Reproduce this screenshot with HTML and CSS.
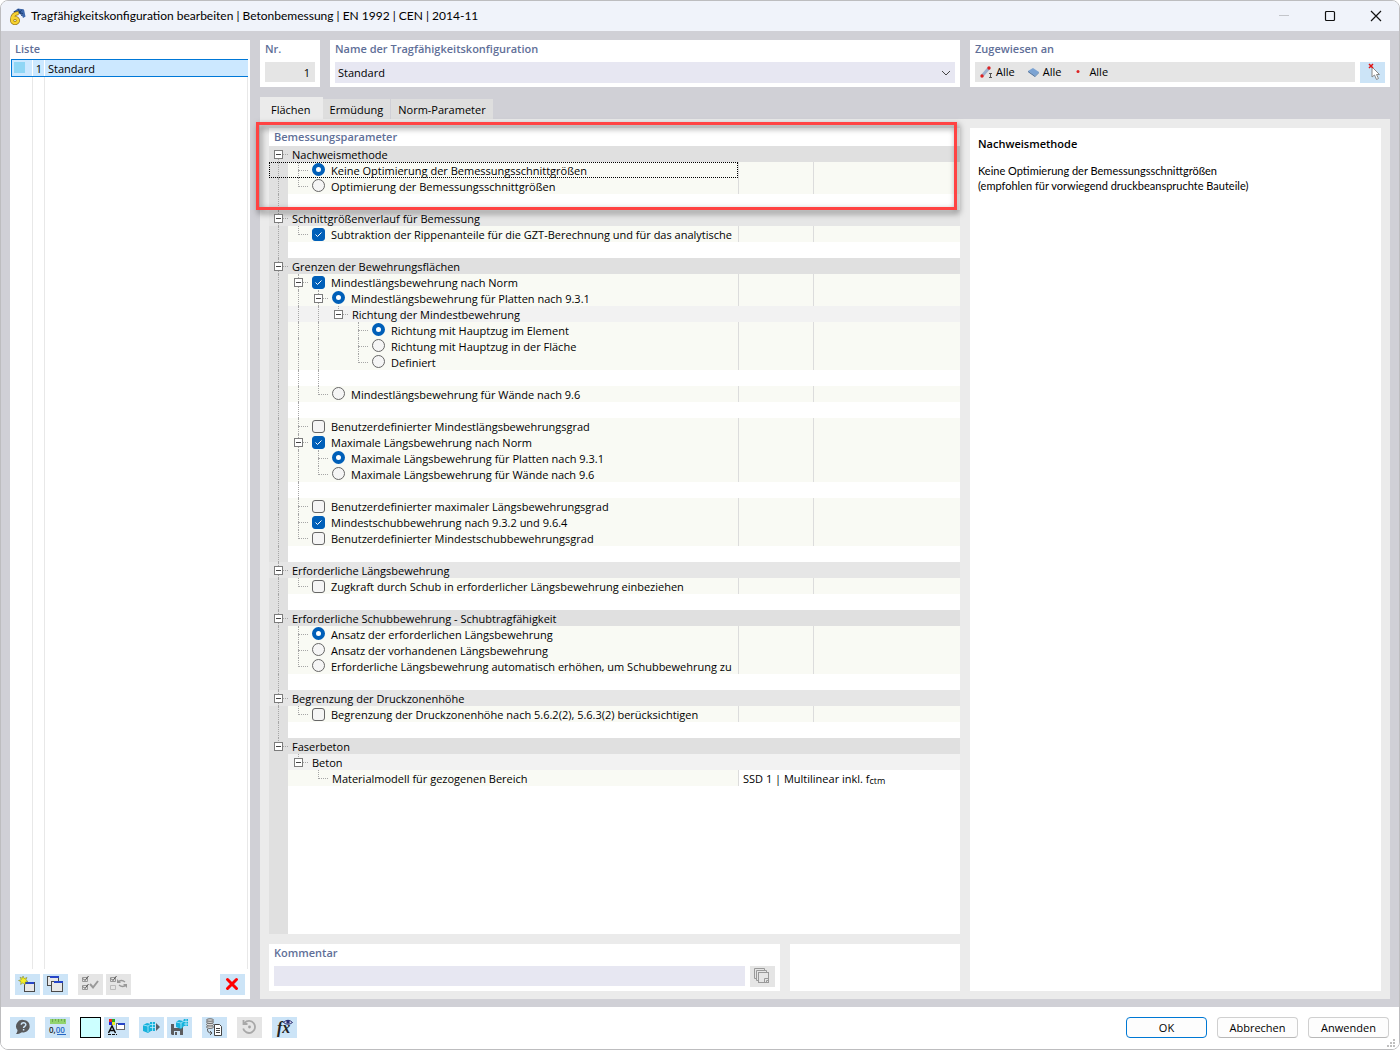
FILE: index.html
```html
<!DOCTYPE html>
<html lang="de">
<head>
<meta charset="utf-8">
<meta name="viewport" content="width=device-width, initial-scale=1">
<title>Tragfähigkeitskonfiguration bearbeiten</title>
<link rel="stylesheet" href="styles.css">
</head>
<body>
<div class="window">
  <header class="titlebar">
    <svg class="app-icon" width="17" height="17" viewBox="0 0 17 17"><path d="m4 4 5-3.500 6 1 1.500 7-2.500 1.500-1.500-4-6-1z" fill="#3f69ad"/><path d="m5 3.500 9 2M9 1l4 7M13 1.500l-3 4" stroke="#1d3f77" fill="none"/><path d="M9.500 5C5 5.500 3 8.500 3 12M9 12.500a3 2.600 0 1 1-6 0 3 2.600 0 1 1 6 0z" stroke="#94741a" stroke-width="4" fill="none"/><path d="M9.500 5C5 5.500 3 8.500 3 12M9 12.500a3 2.600 0 1 1-6 0 3 2.600 0 1 1 6 0z" stroke="#f7d22f" stroke-width="2.600" fill="none"/></svg>
    <h1 class="title">Tragfähigkeitskonfiguration bearbeiten | Betonbemessung | EN 1992 | CEN | 2014-11</h1>
    <div class="window-controls">
      <button class="wc" aria-label="Minimieren" disabled><svg width="12" height="12"><path d="M1 5.500h10" stroke="#c3c5ca"/></svg></button>
      <button class="wc" aria-label="Maximieren"><svg width="12" height="12"><rect x="1.500" y="1.500" width="9" height="9" rx="1" fill="none" stroke="#111" stroke-width="1.200"/></svg></button>
      <button class="wc" aria-label="Schließen"><svg width="12" height="12"><path d="m1 1 10 10M11 1 1 11" stroke="#111" stroke-width="1.200"/></svg></button>
    </div>
  </header>

  <main class="workspace">
    <aside class="panel list-panel">
      <h2 class="caption">Liste</h2>
      <div class="list" role="listbox" aria-label="Liste">
        <div class="list-row" role="option" aria-selected="true"><span class="swatch-cell"><span class="swatch"></span></span><span class="list-no">1</span><span class="list-name">Standard</span></div>
      </div>
      <div class="toolbar list-tools">
        <button class="tool" aria-label="Neu"><svg width="19" height="19" viewBox="0 0 19 19"><rect x="6.500" y="7.500" width="10" height="9" fill="#e8e8e8" stroke="#4a4a4a"/><path d="M7 7h9v2H7z" fill="#2746c8"/><path d="m5 1 1.200 2.600L9 2.500 7.800 5 10 6.500 7.300 7 7 10 5 7.800 2.600 9.500 3 6.700.5 5.500l2.800-.8L2 2.200l2.400 1z" fill="#f4ee25" stroke="#777a20" stroke-width=".5"/></svg></button>
        <button class="tool" aria-label="Kopieren"><svg width="19" height="19" viewBox="0 0 19 19"><rect x="1.500" y="1.500" width="11" height="9" fill="#e8e8e8" stroke="#4a4a4a"/><path d="M4 1h9v2H4z" fill="#2746c8"/><rect x="5.500" y="6.500" width="11" height="10" fill="#e8e8e8" stroke="#4a4a4a"/><path d="M8 6h9v2H8z" fill="#2746c8"/></svg></button>
        <button class="tool off apart" aria-label="Alle auswählen" disabled><svg width="19" height="19" viewBox="0 0 19 19" fill="none" stroke="#999"><path d="M1.500 2.500h5v4h-5zM1.500 10.500h5v4h-5z"/><path d="m2 3.500 2 2L7.500 1M2 11.500l2 2L7.500 9" stroke="#555"/><path d="m9 9 3 3.500L17 6" stroke-width="2"/></svg></button>
        <button class="tool off" aria-label="Auswahl umkehren" disabled><svg width="19" height="19" viewBox="0 0 19 19" fill="none" stroke="#999"><path d="M1.500 2.500h5v4h-5z"/><path d="m2 3.500 2 2L7.500 1" stroke="#555"/><path d="M1.500 10.500h5v4h-5z" stroke="#bbb"/><path d="M9 7.500c2-3 5-2 7-.5M17 9.500c-2 3-5 2-7 .5" stroke-width="1.500"/><path d="M8 4v4h4zM18 13V9h-4z" fill="#999" stroke="none"/></svg></button>
        <button class="tool last" aria-label="Löschen"><svg width="19" height="19" viewBox="0 0 19 19"><path d="m4.500 4.500 9 9M13.500 4.500l-9 9" stroke="#f00" stroke-width="3" stroke-linecap="round"/></svg></button>
      </div>
    </aside>

    <div class="content">
      <div class="head">
        <section class="panel nr-panel"><label class="caption" for="nr">Nr.</label><input class="field nr" id="nr" value="1" readonly></section>
        <section class="panel name-panel"><label class="caption" for="cfg">Name der Tragfähigkeitskonfiguration</label>
          <select class="field cfg" id="cfg"><option>Standard</option></select></section>
        <section class="panel assigned-panel"><h2 class="caption">Zugewiesen an</h2>
          <div class="assigned">
            <div class="assigned-list">
              <span class="assigned-item"><svg width="13" height="13"><path d="m2 10 7-8" stroke="#9db1cf" stroke-width="3"/><circle cx="2" cy="10" r="1.700" fill="#d22"/><circle cx="9" cy="2" r="1.700" fill="#d22"/><path d="M9 7.500h3M10.500 7.500v4M9 11.500h3" stroke="#555"/></svg>Alle</span>
              <span class="assigned-item"><svg width="13" height="13"><path d="m1 5 5-3 6 4-4 4z" fill="#7ba3d3"/><path d="m1 5 7 5v1L1 6z" fill="#3e6595"/><path d="m8 10 4-4v1l-4 4z" fill="#527eae"/></svg>Alle</span>
              <span class="assigned-item"><svg width="13" height="13"><circle cx="5" cy="5.500" r="1.500" fill="#d22"/></svg>Alle</span>
            </div>
            <button class="tool" aria-label="Auswählen"><svg width="19" height="19" viewBox="0 0 19 19"><path d="M9 4v10l2.500-2 2 4.500 2-1-2-4h3z" fill="#fff" stroke="#888"/><path d="m6 1 4 4M10 1 6 5" stroke="#e01515" stroke-width="1.500"/></svg></button>
          </div></section>
      </div>

      <nav class="tabs" role="tablist">
        <button class="tab active" role="tab" aria-selected="true">Flächen</button><button class="tab" role="tab">Ermüdung</button><button class="tab" role="tab">Norm-Parameter</button>
      </nav>

      <div class="page">
        <div class="page-left">
          <section class="panel tree-panel">
            <h2 class="caption tree-caption">Bemessungsparameter</h2>
            <div class="tree">
              <div class="row cat"><div class="name"><i class="c x down"><button class="exp" aria-label="Einklappen"></button></i><span class="text">Nachweismethode</span></div></div>
              <div class="row edit"><div class="name focus"><i class="c v"></i><i class="c t"></i><label class="text"><input type="radio" name="opt" checked>Keine Optimierung der Bemessungsschnittgrößen</label></div><span class="v1"></span><span class="v2"></span></div>
              <div class="row edit"><div class="name"><i class="c v"></i><i class="c l"></i><label class="text"><input type="radio" name="opt">Optimierung der Bemessungsschnittgrößen</label></div><span class="v1"></span><span class="v2"></span></div>
              <div class="row"><div class="name"><i class="c v"></i></div></div>

              <div class="row cat alt"><div class="name"><i class="c x up down"><button class="exp" aria-label="Einklappen"></button></i><span class="text">Schnittgrößenverlauf für Bemessung</span></div></div>
              <div class="row edit"><div class="name"><i class="c v"></i><i class="c l"></i><label class="text"><input type="checkbox" checked>Subtraktion der Rippenanteile für die GZT-Berechnung und für das analytische</label></div><span class="v1"></span><span class="v2"></span></div>
              <div class="row"><div class="name"><i class="c v"></i></div></div>

              <div class="row cat"><div class="name"><i class="c x up down"><button class="exp" aria-label="Einklappen"></button></i><span class="text">Grenzen der Bewehrungsflächen</span></div></div>
              <div class="row edit"><div class="name"><i class="c v"></i><i class="c x up down"><button class="exp" aria-label="Einklappen"></button></i><label class="text"><input type="checkbox" checked>Mindestlängsbewehrung nach Norm</label></div><span class="v1"></span><span class="v2"></span></div>
              <div class="row edit"><div class="name"><i class="c v"></i><i class="c v"></i><i class="c x up down"><button class="exp" aria-label="Einklappen"></button></i><label class="text"><input type="radio" name="min" checked>Mindestlängsbewehrung für Platten nach 9.3.1</label></div><span class="v1"></span><span class="v2"></span></div>
              <div class="row sub"><div class="name"><i class="c v"></i><i class="c v"></i><i class="c v"></i><i class="c x up"><button class="exp" aria-label="Einklappen"></button></i><span class="text">Richtung der Mindestbewehrung</span></div></div>
              <div class="row edit"><div class="name"><i class="c v"></i><i class="c v"></i><i class="c v"></i><i class="c"></i><i class="c t"></i><label class="text"><input type="radio" name="dir" checked>Richtung mit Hauptzug im Element</label></div><span class="v1"></span><span class="v2"></span></div>
              <div class="row edit"><div class="name"><i class="c v"></i><i class="c v"></i><i class="c v"></i><i class="c"></i><i class="c t"></i><label class="text"><input type="radio" name="dir">Richtung mit Hauptzug in der Fläche</label></div><span class="v1"></span><span class="v2"></span></div>
              <div class="row edit"><div class="name"><i class="c v"></i><i class="c v"></i><i class="c v"></i><i class="c"></i><i class="c l"></i><label class="text"><input type="radio" name="dir">Definiert</label></div><span class="v1"></span><span class="v2"></span></div>
              <div class="row"><div class="name"><i class="c v"></i><i class="c v"></i><i class="c v"></i></div></div>
              <div class="row edit"><div class="name"><i class="c v"></i><i class="c v"></i><i class="c l"></i><label class="text"><input type="radio" name="min">Mindestlängsbewehrung für Wände nach 9.6</label></div><span class="v1"></span><span class="v2"></span></div>
              <div class="row"><div class="name"><i class="c v"></i><i class="c v"></i></div></div>
              <div class="row edit"><div class="name"><i class="c v"></i><i class="c t"></i><label class="text"><input type="checkbox">Benutzerdefinierter Mindestlängsbewehrungsgrad</label></div><span class="v1"></span><span class="v2"></span></div>
              <div class="row edit"><div class="name"><i class="c v"></i><i class="c x up down"><button class="exp" aria-label="Einklappen"></button></i><label class="text"><input type="checkbox" checked>Maximale Längsbewehrung nach Norm</label></div><span class="v1"></span><span class="v2"></span></div>
              <div class="row edit"><div class="name"><i class="c v"></i><i class="c v"></i><i class="c t"></i><label class="text"><input type="radio" name="max" checked>Maximale Längsbewehrung für Platten nach 9.3.1</label></div><span class="v1"></span><span class="v2"></span></div>
              <div class="row edit"><div class="name"><i class="c v"></i><i class="c v"></i><i class="c l"></i><label class="text"><input type="radio" name="max">Maximale Längsbewehrung für Wände nach 9.6</label></div><span class="v1"></span><span class="v2"></span></div>
              <div class="row"><div class="name"><i class="c v"></i><i class="c v"></i></div></div>
              <div class="row edit"><div class="name"><i class="c v"></i><i class="c t"></i><label class="text"><input type="checkbox">Benutzerdefinierter maximaler Längsbewehrungsgrad</label></div><span class="v1"></span><span class="v2"></span></div>
              <div class="row edit"><div class="name"><i class="c v"></i><i class="c t"></i><label class="text"><input type="checkbox" checked>Mindestschubbewehrung nach 9.3.2 und 9.6.4</label></div><span class="v1"></span><span class="v2"></span></div>
              <div class="row edit"><div class="name"><i class="c v"></i><i class="c l"></i><label class="text"><input type="checkbox">Benutzerdefinierter Mindestschubbewehrungsgrad</label></div><span class="v1"></span><span class="v2"></span></div>
              <div class="row"><div class="name"><i class="c v"></i></div></div>

              <div class="row cat alt"><div class="name"><i class="c x up down"><button class="exp" aria-label="Einklappen"></button></i><span class="text">Erforderliche Längsbewehrung</span></div></div>
              <div class="row edit"><div class="name"><i class="c v"></i><i class="c l"></i><label class="text"><input type="checkbox">Zugkraft durch Schub in erforderlicher Längsbewehrung einbeziehen</label></div><span class="v1"></span><span class="v2"></span></div>
              <div class="row"><div class="name"><i class="c v"></i></div></div>

              <div class="row cat"><div class="name"><i class="c x up down"><button class="exp" aria-label="Einklappen"></button></i><span class="text">Erforderliche Schubbewehrung - Schubtragfähigkeit</span></div></div>
              <div class="row edit"><div class="name"><i class="c v"></i><i class="c t"></i><label class="text"><input type="radio" name="shear" checked>Ansatz der erforderlichen Längsbewehrung</label></div><span class="v1"></span><span class="v2"></span></div>
              <div class="row edit"><div class="name"><i class="c v"></i><i class="c t"></i><label class="text"><input type="radio" name="shear">Ansatz der vorhandenen Längsbewehrung</label></div><span class="v1"></span><span class="v2"></span></div>
              <div class="row edit"><div class="name"><i class="c v"></i><i class="c l"></i><label class="text"><input type="radio" name="shear">Erforderliche Längsbewehrung automatisch erhöhen, um Schubbewehrung zu</label></div><span class="v1"></span><span class="v2"></span></div>
              <div class="row"><div class="name"><i class="c v"></i></div></div>

              <div class="row cat alt"><div class="name"><i class="c x up down"><button class="exp" aria-label="Einklappen"></button></i><span class="text">Begrenzung der Druckzonenhöhe</span></div></div>
              <div class="row edit"><div class="name"><i class="c v"></i><i class="c l"></i><label class="text"><input type="checkbox">Begrenzung der Druckzonenhöhe nach 5.6.2(2), 5.6.3(2) berücksichtigen</label></div><span class="v1"></span><span class="v2"></span></div>
              <div class="row"><div class="name"><i class="c v"></i></div></div>

              <div class="row cat"><div class="name"><i class="c x up"><button class="exp" aria-label="Einklappen"></button></i><span class="text">Faserbeton</span></div></div>
              <div class="row sub"><div class="name"><i class="c"></i><i class="c x up"><button class="exp" aria-label="Einklappen"></button></i><span class="text">Beton</span></div></div>
              <div class="row edit"><div class="name"><i class="c"></i><i class="c"></i><i class="c l"></i><span class="text">Materialmodell für gezogenen Bereich</span></div><span class="v-wide">SSD 1 | Multilinear inkl. f<span class="index">ctm</span></span></div>
              <div class="row rest"><div class="name"><i class="c"></i></div></div>
            </div>
          </section>
          <div class="bottom">
            <section class="panel comment-panel"><label class="caption" for="comment">Kommentar</label>
              <div class="comment"><input class="field" id="comment"><button class="tool off" aria-label="Kommentare" disabled><svg width="19" height="19" viewBox="0 0 19 19" fill="none" stroke="#999"><path d="M3.500 11.500h-2v-10h10v2M5.500 13.500h-2v-10h10v2"/><rect x="5.500" y="5.500" width="10" height="10"/><path d="M11.500 15v-3.500H15M13.500 15v-1.500H15"/></svg></button></div></section>
            <section class="panel spare-panel"></section>
          </div>
        </div>
        <aside class="panel info">
          <h2 class="info-title">Nachweismethode</h2>
          <p class="info-text">Keine Optimierung der Bemessungsschnittgrößen<br>(empfohlen für vorwiegend druckbeanspruchte Bauteile)</p>
        </aside>
        <div class="marker"></div>
      </div>
    </div>
  </main>

  <footer class="footer">
    <div class="toolbar">
      <button class="tool" aria-label="Hilfe"><svg width="19" height="19" viewBox="0 0 19 19"><path d="M10.500 2a6.200 6.200 0 1 1-1.500 12.200C7 15.500 5 16 3 16c1-1.200 1.500-2.500 1.500-4A6.200 6.200 0 0 1 10.500 2z" fill="#58595b"/><path d="M8.300 6.800c0-3 4.700-2.700 4.500 0 0 1.500-2.200 1.500-2.200 3.200M10.600 11v1.500" stroke="#cce4f7" stroke-width="1.500" fill="none"/></svg></button>
      <button class="tool apart" aria-label="Einheiten"><svg width="19" height="19" viewBox="0 0 19 19"><path d="M2 1h16v5H2z" fill="#92d36e"/><path d="M4.500 1v3M7.500 1v2M10.500 1v3M13.500 1v2M16.500 1v3" stroke="#6cab50"/><text x="1" y="15" class="icon-num">0,<tspan fill="#2566c4">00</tspan></text><path d="M9 16.500h9" stroke="#2566c4"/></svg></button>
      <button class="tool color apart" aria-label="Farbe"></button>
      <button class="tool" aria-label="Darstellung"><svg width="19" height="19" viewBox="0 0 19 19"><path d="M2 1h3v3H2z" fill="#e22"/><path d="M5 1h3v3H5z" fill="#2a2"/><path d="M2 4h3v3H2z" fill="#22d"/><path d="M5 4h3v3H5z" fill="#ee2"/><path d="m1.500 15 3.500-7 3.500 7M3 12.500h4" stroke="#111" stroke-width="1.500" fill="none"/><path d="M1 16.500h9" stroke="#111" stroke-dasharray="3 1"/><rect x="9.500" y="5.500" width="8" height="6" fill="#fff" stroke="#666"/><path d="M11 5h7v2h-7z" fill="#2746c8"/></svg></button>
      <button class="tool apart" aria-label="Importieren"><svg width="19" height="19" viewBox="0 0 19 19"><path d="m1 7 4-2 4 1v7l-3 2-5-2z" fill="#17b2dc"/><path d="m1 7 5 1 3-2M6 8v6" stroke="#c9f1ff" stroke-width=".7" fill="none"/><path d="M8 4h5v9H8z" fill="#17b2dc"/><path d="M8 6.500h5M8 9.500h5M10.500 4v9" stroke="#c9f1ff" stroke-width=".7"/><path d="m14 5 4 4-4 4z" fill="#59616b"/></svg></button>
      <button class="tool" aria-label="Speichern"><svg width="19" height="19" viewBox="0 0 19 19"><path d="M1 6h12v11H2l-1-1z" fill="#5c5c5e"/><path d="M4 6h6v4H4zM4 13h6v4H4z" fill="#cce4f7"/><path d="M5 14h2v3H5z" fill="#5c5c5e"/><path d="m6 4 3-2 4 1 1-2h4v7h-4l-3 3-5-2z" fill="#17b2dc"/><path d="m6 4 5 1 3-2M11 5v5M14 3.500h4M14 6h4M16 1v7" stroke="#c9f1ff" stroke-width=".7" fill="none"/></svg></button>
      <button class="tool apart" aria-label="Aus Datenbank"><svg width="19" height="19" viewBox="0 0 19 19"><g fill="#d8d8d8" stroke="#555" stroke-width=".8"><ellipse cx="5" cy="9" rx="3.500" ry="1.500"/><ellipse cx="5" cy="6.500" rx="3.500" ry="1.500"/><ellipse cx="5" cy="4" rx="3.500" ry="1.500"/><ellipse cx="5" cy="2" rx="3.500" ry="1.300"/></g><path d="M2.500 11c0 3 1 4 4 4M5 13l2 2-2 2" stroke="#555" fill="none"/><path d="M9.500 6.500h5l2 2v9h-7z" fill="#fff" stroke="#444"/><path d="M11 10.500h4M11 12.500h4M11 14.500h4" stroke="#444"/></svg></button>
      <button class="tool off apart" aria-label="Zurücksetzen" disabled><svg width="19" height="19" viewBox="0 0 19 19"><path d="M4.500 5a6 6 0 1 1-1.300 5.500M3.500 2v4h4" stroke="#a8a8a8" stroke-width="1.800" fill="none"/><circle cx="9.500" cy="9" r="1.400" fill="#a2a2a2"/></svg></button>
      <button class="tool apart" aria-label="Formeln"><svg width="19" height="19" viewBox="0 0 19 19"><text x="2" y="15" class="icon-fx">fx</text><path d="M8.500 4.500Q13 0 17.500 4.500 13 8 8.500 4.500z" fill="#dde" stroke="#262b70"/><circle cx="13" cy="4" r="1.700" fill="#262b70"/></svg></button>
    </div>
    <div class="dialog-buttons"><button class="btn primary">OK</button><button class="btn">Abbrechen</button><button class="btn">Anwenden</button></div>
    <svg class="grip" width="8" height="8" fill="#bfbfbf"><path d="M6 0h2v2H6zM3 3h2v2H3zM6 3h2v2H6zM0 6h2v2H0zM3 6h2v2H3zM6 6h2v2H6z"/></svg>
  </footer>
</div>
</body>
</html>
```
FILE: styles.css
```css
* { box-sizing: border-box; }

body {
  margin: 0;
  background: #fff;
  color: #000;
  font: 11px/16px "Open Sans", "Noto Sans", sans-serif;
}

button, input, select { margin: 0; padding: 0; border: 0; border-radius: 0; font: inherit; color: inherit; }
h1, h2, p { margin: 0; font: inherit; }
svg { display: block; flex: none; }

.window {
  position: relative;
  display: flex;
  flex-direction: column;
  min-height: 100vh;
  border: 1px solid #bdbdbf;
  border-radius: 8px;
  overflow: hidden;
}

/* title bar */
.titlebar { display: flex; align-items: center; gap: 5px; height: 30px; padding: 0 8px; background: #f0f3fa; }
.title { flex: 1; font-family: Lato, "Open Sans", sans-serif; font-size: 12px; }
.window-controls { display: flex; gap: 34px; padding: 0 9px 0 0; }
.wc { width: 12px; height: 12px; background: none; }

/* work area */
.workspace { flex: 1; display: flex; gap: 10px; padding: 9px 9px 8px; background: #d0d0d6; }
.panel { background: #fff; }
.caption { display: block; padding: 0 5px; line-height: 18px; font-weight: 600; color: #5f6f98; }

.list-panel { flex: none; display: flex; flex-direction: column; width: 240px; }
.list {
  flex: 1;
  margin: 1px 2px 0 1px;
  background:
    linear-gradient(#e8e8e8, #e8e8e8) 21px 0 / 1px 100% no-repeat,
    linear-gradient(#e8e8e8, #e8e8e8) 33px 0 / 1px 100% no-repeat,
    linear-gradient(#e8e8e8, #e8e8e8) 100% 0 / 1px 100% no-repeat;
}
.list-row { display: flex; height: 18px; border: 1px solid #0078d7; border-right: 0; background: #cce8ff; }
.swatch-cell { width: 21px; padding: 2px; border-right: 1px solid #fff; }
.swatch { display: block; width: 11px; height: 11px; background: #8fd6f5; }
.list-no { width: 12px; padding-right: 2px; text-align: right; border-right: 1px solid #fff; line-height: 18px; }
.list-name { padding-left: 3px; line-height: 18px; }

.toolbar { display: flex; gap: 3px; }
.list-tools { padding: 5px 5px 4px; }
.tool { flex: none; display: grid; place-items: center; width: 25px; height: 21px; background: #cce4f7; }
.tool.off { background: #e5e5e5; }
.tool.apart { margin-left: 7px; }
.tool.last { margin-left: auto; }
.tool.color { width: 21px; border: 1px solid #000; background: #ccffff; }
.icon-num { font: 600 8px "Open Sans", sans-serif; fill: #222; }
.icon-fx { font: italic bold 16px "Liberation Serif", serif; fill: #222; }

.content { flex: 1; min-width: 0; display: flex; flex-direction: column; }
.head { display: flex; gap: 10px; }
.head .panel { height: 47px; }
.nr-panel { width: 60px; padding-right: 5px; }
.name-panel { flex: 1; padding-right: 5px; }
.assigned-panel { width: 420px; padding-right: 5px; }
.field { display: block; width: 100%; height: 20px; margin: 4px 0 0 0; padding: 0 3px; background: #e7e7f2; appearance: none; outline: 0; }
.nr-panel .field, .name-panel .field { width: calc(100% - 5px); margin-left: 5px; }
.field.nr { padding: 0 5px; background: #e5e5e5; text-align: right; }
.field.cfg {
  height: 21px;
  background: #e7e7f2 url("data:image/svg+xml,%3Csvg xmlns='http://www.w3.org/2000/svg' width='10' height='6'%3E%3Cpath d='M1 1l4 4 4-4' fill='none' stroke='%23444'/%3E%3C/svg%3E") no-repeat right 4px center;
}
.assigned { display: flex; gap: 5px; padding: 4px 0 0 5px; }
.assigned-list { flex: 1; display: flex; gap: 12px; padding-left: 5px; height: 20px; background: #e5e5e5; }
.assigned-item { display: flex; align-items: center; gap: 3px; line-height: 22px; }

/* tabs */
.tabs { display: flex; align-items: flex-end; height: 22px; margin-top: 10px; }
.tab { height: 20px; padding: 2px 7px 0; border-right: 1px solid #d0d0d6; background: #dedede; }
.tab.active { height: 22px; padding: 4px 12px 0 11px; border: 0; background: #ebebeb; }

.page { position: relative; flex: 1; display: flex; gap: 10px; padding: 9px 9px 8px; background: #ebebeb; }
.page-left { flex: 1; min-width: 0; display: flex; flex-direction: column; gap: 10px; }
.info { width: 411px; padding: 8px; }
.info-title { font-weight: 600; }
.info-text { margin-top: 11px; font-family: Lato, "Open Sans", sans-serif; line-height: 15px; }

/* parameter tree */
.tree-panel { flex: 1; display: flex; flex-direction: column; }
.tree { flex: 1; display: flex; flex-direction: column; }
.row { display: flex; height: 16px; line-height: 18px; }
.row.rest { flex: 1; height: auto; }
.row.cat { background: #e0e0e0; }
.row.cat.alt { background: #e6e6e6; }
.row.sub { background: #f2f2f2; }
.row.edit .name, .row.edit .v1, .row.edit .v2 { background: #f9faf4; }
.name { flex: 1; min-width: 0; display: flex; overflow: hidden; }
.name.focus { outline: 1px dotted #000; outline-offset: -1px; }
.text { display: flex; align-items: flex-start; gap: 6px; padding-left: 4px; white-space: nowrap; }
.v1 { width: 75px; border-left: 1px solid #dcdcdc; }
.v2 { width: 147px; border-left: 1px solid #dcdcdc; }
.v-wide { width: 222px; padding-left: 4px; border-left: 1px solid #dcdcdc; white-space: nowrap; }
.index { font-size: 9px; line-height: 1; vertical-align: -1px; }

/* branch cells: ::before is the trunk, ::after the twig */
.c { flex: none; display: grid; grid-template: 9px 7px / 10px 10px; width: 20px; }
.c:first-child { grid-template-columns: 9px 10px; width: 19px; background: #e0e0e0; }
.alt .c:first-child { background: #e6e6e6; }
.v::before, .t::before, .x.up.down::before { content: ""; grid-area: 1 / 2 / 3 / 3; border-left: 1px dotted #a6a6a6; }
.l::before, .x.up:not(.down)::before { content: ""; grid-area: 1 / 2 / 2 / 3; border-left: 1px dotted #a6a6a6; }
.x.down:not(.up)::before { content: ""; grid-area: 2 / 2 / 3 / 3; border-left: 1px dotted #a6a6a6; }
.t::after, .l::after, .x::after { content: ""; grid-area: 1 / 2 / 2 / 3; border-bottom: 1px dotted #a6a6a6; }
.exp {
  z-index: 1;
  grid-area: 1 / 1 / 3 / 3;
  width: 9px;
  height: 9px;
  margin: 4px 0 0 6px;
  border: 1px solid #7c7c7c;
  background: linear-gradient(#444, #444) center / 5px 1px no-repeat #fff;
}
.c:first-child .exp { margin-left: 5px; }

.text input { flex: none; width: 13px; height: 13px; margin-top: 2px; appearance: none; border: 1px solid #666; background: #f5f5f5; }
.text input[type="checkbox"] { border-radius: 3px; }
.text input[type="radio"] { margin-top: 1px; border-radius: 50%; }
.text input[type="radio"]:checked { border: 4px solid #005fb8; background: #fff; }
.text input[type="checkbox"]:checked {
  border-color: #005fb8;
  background: #005fb8 url("data:image/svg+xml,%3Csvg xmlns='http://www.w3.org/2000/svg' width='11' height='11'%3E%3Cpath d='M2.500 5.500l2 2 4-4' fill='none' stroke='%23fff'/%3E%3C/svg%3E") center no-repeat;
}

/* comment */
.bottom { display: flex; gap: 10px; }
.bottom .panel { height: 47px; }
.comment-panel { flex: 1; }
.comment { display: flex; gap: 5px; padding: 4px 5px 0; }
.comment .field { flex: 1; width: auto; min-width: 0; margin: 0; }
.spare-panel { width: 170px; }

/* highlighted region over the first group */
.marker {
  position: absolute;
  top: 3px;
  right: 433px;
  left: -4px;
  height: 88px;
  border: 3px solid #ff4343;
  filter: drop-shadow(2px 3px 3px rgba(0, 0, 0, .55));
  pointer-events: none;
}

/* footer */
.footer { display: flex; justify-content: space-between; align-items: flex-start; height: 42px; padding: 10px 10px 0 9px; background: #fff; }
.dialog-buttons { display: flex; gap: 10px; }
.btn { width: 81px; height: 21px; padding-top: 1px; border: 1px solid #d0d0d0; border-bottom-color: #b8b8b8; border-radius: 4px; background: #fdfdfd; }
.btn.primary { border-color: #0078d4; }
.grip { position: absolute; right: 4px; bottom: 2px; }
```
